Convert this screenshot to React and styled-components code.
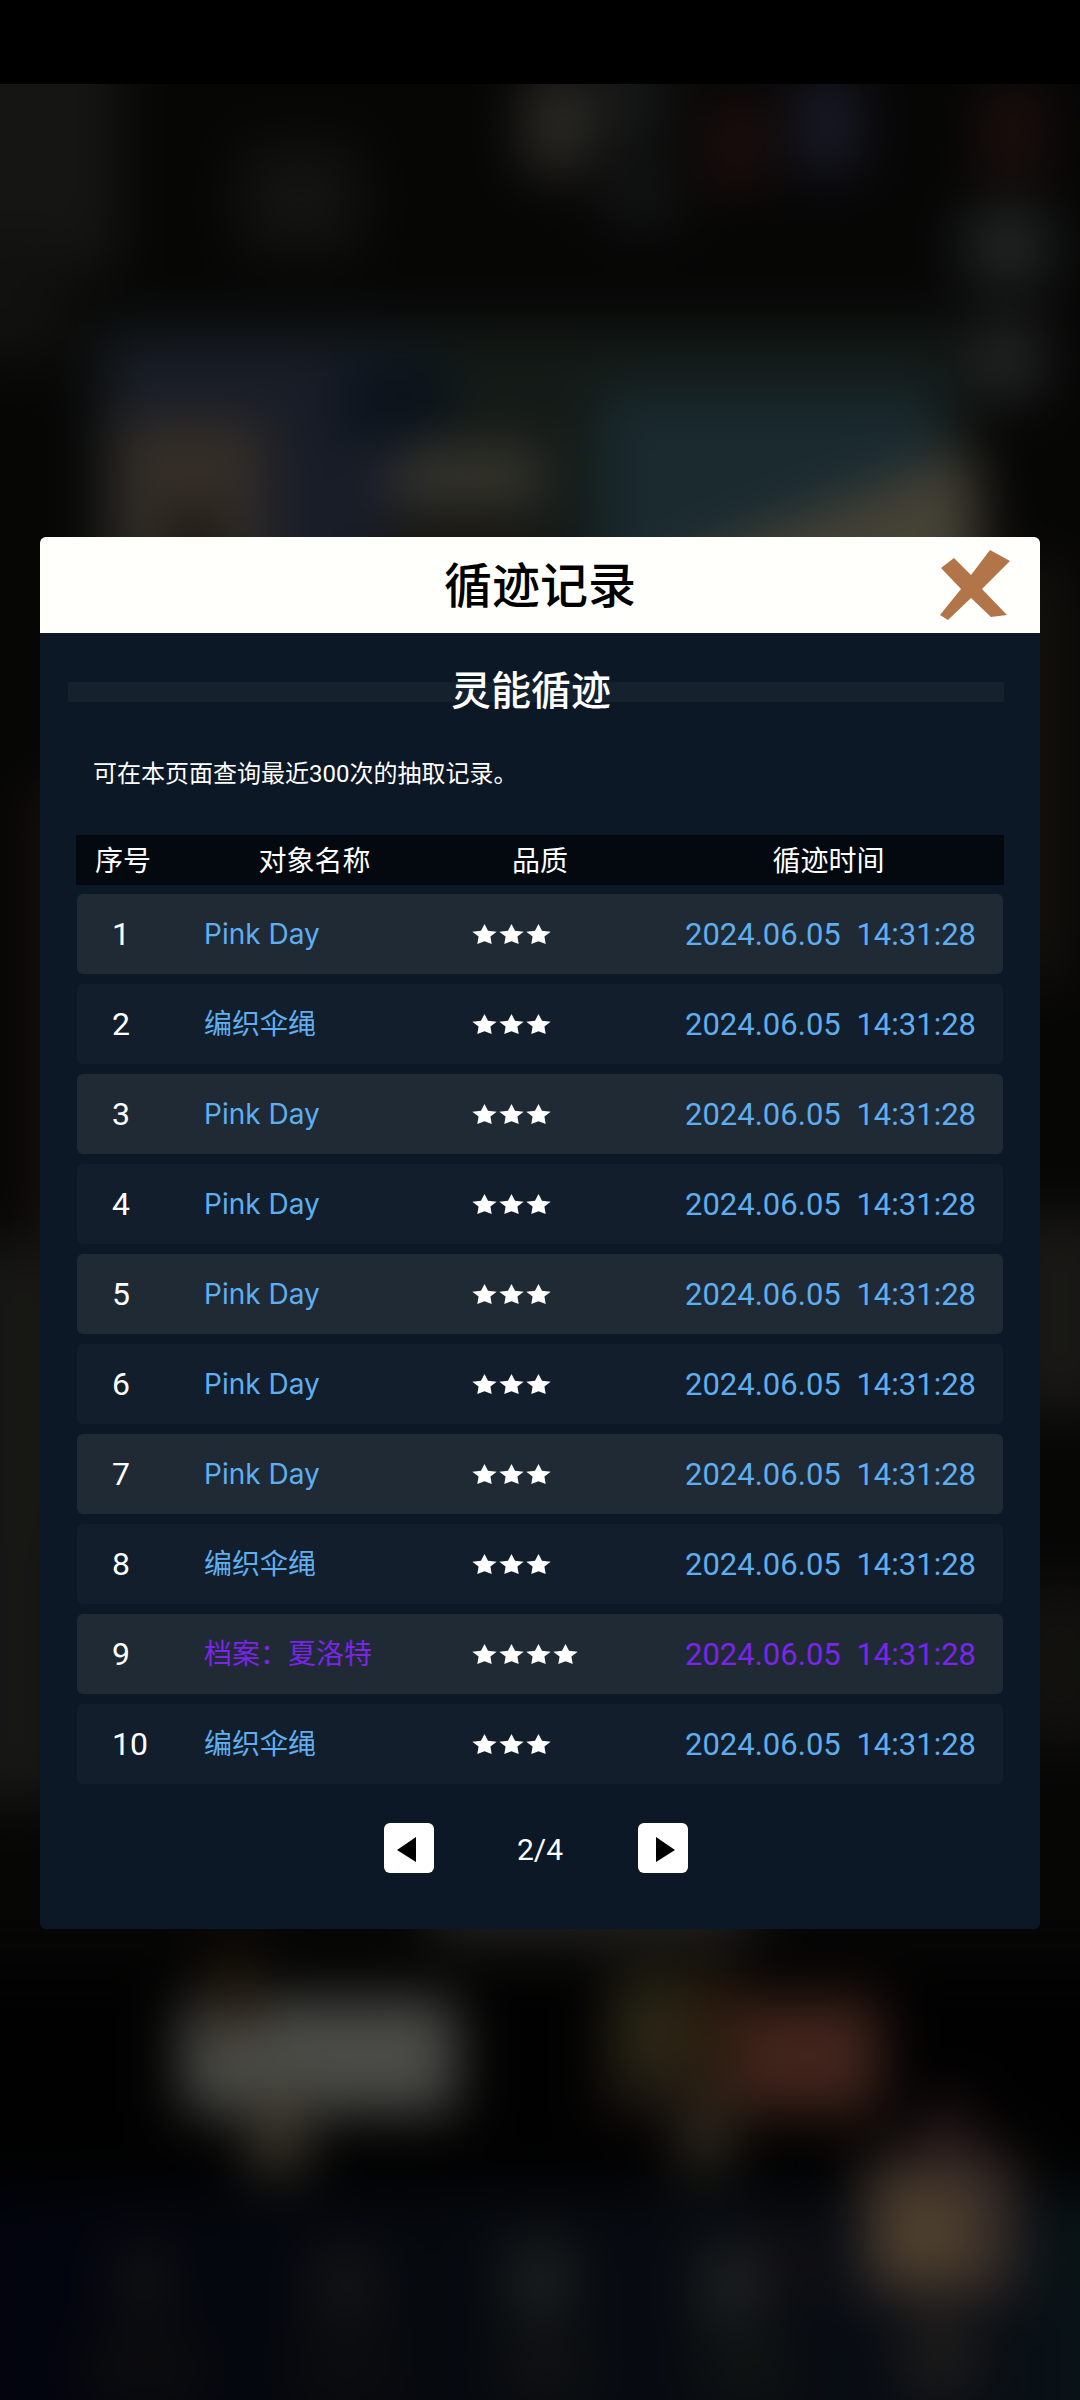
import React, { useState } from "react";
import styled, { createGlobalStyle } from "styled-components";

const records = [
  { id: 1, name: "Pink Day", stars: 3 },
  { id: 2, name: "编织伞绳", stars: 3 },
  { id: 3, name: "Pink Day", stars: 3 },
  { id: 4, name: "Pink Day", stars: 3 },
  { id: 5, name: "Pink Day", stars: 3 },
  { id: 6, name: "Pink Day", stars: 3 },
  { id: 7, name: "Pink Day", stars: 3 },
  { id: 8, name: "编织伞绳", stars: 3 },
  { id: 9, name: "档案：夏洛特", stars: 4 },
  { id: 10, name: "编织伞绳", stars: 3 },
].map((r) => ({ ...r, date: "2024.06.05", time: "14:31:28" }));

//x, y, width, height and colour of every soft shape behind the dialog
const glows = [
  //top bar of the scene
  [-60, -60, 180, 250, "#42423c"],
  [-60, 150, 130, 130, "#34342e"],
  [240, 60, 120, 110, "#3c3c38"],
  [590, -30, 80, 90, "#444a48"],
  [523, -10, 66, 100, "#848070"],
  [600, 80, 80, 60, "#3c4040"],
  [710, 15, 55, 90, "#60322c"],
  [795, -10, 65, 100, "#50507a"],
  [985, 5, 55, 90, "#62362c"],
  //banner
  [95, 240, 870, 320, "#3c5048"],
  [110, 260, 300, 280, "#4a5878"],
  [345, 285, 100, 70, "#1c3450"],
  [460, 260, 130, 120, "#3e5046"],
  [600, 310, 340, 240, "#508090"],
  [115, 335, 150, 290, "#a08c78"],
  [170, 430, 50, 150, "#40382e"],
  [395, 365, 145, 55, "#b0a890"],
  [385, 440, 150, 130, "#483c30"],
  [965, 125, 85, 75, "#687472"],
  [975, 235, 66, 80, "#6c7470"],
  //left and right of the dialog
  [36, 700, 60, 760, "#4c3826"],
  [-40, 1160, 110, 560, "#484840"],
  [1020, 480, 40, 420, "#504430"],
  [1000, 1130, 120, 200, "#4c4a42"],
  [1000, 1500, 120, 160, "#38362e"],
  //bottom buttons
  [430, 1790, 320, 70, "#68665c"],
  [182, 1915, 275, 114, "#e4e6d8"],
  [215, 1866, 40, 80, "#6c4c24"],
  [248, 2010, 60, 80, "#b0a484"],
  [610, 1890, 90, 110, "#807444"],
  [600, 2000, 70, 30, "#583c38"],
  [690, 1915, 190, 114, "#c87058"],
  [690, 1890, 50, 140, "#80502c"],
  [678, 2010, 54, 80, "#8c7c60"],
];

const lights = [
  [120, 2160, 46, 70, "#403c40"],
  [315, 2165, 60, 70, "#404448"],
  [508, 2155, 64, 80, "#586060"],
  [700, 2160, 60, 80, "#5c6464"],
  [770, 2155, 40, 50, "#4c3438"],
  [90, 2250, 110, 70, "#28282c"],
  [300, 2250, 90, 70, "#28282c"],
  [500, 2250, 90, 70, "#303638"],
  [700, 2250, 90, 70, "#303a38"],
  [920, 2020, 50, 60, "#804c54"],
  [862, 2070, 155, 140, "#a8887c"],
  [880, 2105, 90, 90, "#f0c48c"],
  [905, 2220, 70, 90, "#585450"],
];

const Glow = ({ shape: [x, y, width, height, fill] }) => (
  <rect x={x} y={y} width={width} height={height} fill={fill} />
);

function Backdrop() {
  return (
    <Scene viewBox="0 0 1080 2316" preserveAspectRatio="none" aria-hidden="true">
      <defs>
        <filter
          id="soft"
          filterUnits="userSpaceOnUse"
          x="-120"
          y="-120"
          width="1320"
          height="2560"
          colorInterpolationFilters="sRGB"
        >
          <feGaussianBlur stdDeviation="27" />
        </filter>
        <linearGradient id="floor" x1="0" x2="1">
          <stop offset="0" stopColor="#080c2c" />
          <stop offset="0.4" stopColor="#121c2c" />
          <stop offset="0.85" stopColor="#1e2c40" />
          <stop offset="1" stopColor="#1b5048" />
        </linearGradient>
      </defs>
      <rect width="1080" height="2316" fill="#141412" />
      <g filter="url(#soft)">
        <rect x="-100" y="1880" width="1300" height="260" fill="#060606" />
        {glows.map((shape) => (
          <Glow key={shape.join()} shape={shape} />
        ))}
        <path d="M680 480 900 395 975 360 985 560 640 560Z" fill="#d4c8a4" />
        <rect x="-100" y="2110" width="1300" height="320" fill="url(#floor)" />
        {lights.map((shape) => (
          <Glow key={shape.join()} shape={shape} />
        ))}
      </g>
      <rect width="1080" height="2316" fill="black" opacity="0.67" />
    </Scene>
  );
}

function Star() {
  return (
    <StarIcon viewBox="0 0 27 24" aria-hidden="true">
      <path d="M13.5 2 17 8.700 25.700 9.700 19.400 14.600 20.700 22 13.500 19.300 6.300 22 7.600 14.600 1.300 9.700 10 8.700Z" />
    </StarIcon>
  );
}

function App() {
  const [page, setPage] = useState(2);
  return (
    <Page>
      <GlobalStyle />
      <StatusBar />
      <Stage>
        <Backdrop />
        <Dialog role="dialog" aria-labelledby="dialog-title">
          <DialogHeader>
            <h1 id="dialog-title">循迹记录</h1>
            <CloseButton type="button" aria-label="关闭">
              <svg viewBox="0 0 70 73">
                <path d="M1 18 14 8 31 25 50 0 70 11 42 39 67 65 51 67 31 48 8 70 0 65 21 39Z" />
              </svg>
            </CloseButton>
          </DialogHeader>
          <Body>
            <Ribbon>
              <h2>灵能循迹</h2>
            </Ribbon>
            <Note>可在本页面查询最近300次的抽取记录。</Note>
            <Table>
              <thead>
                <HeadRow>
                  <th>序号</th>
                  <th>对象名称</th>
                  <th>品质</th>
                  <TimeHead>循迹时间</TimeHead>
                </HeadRow>
              </thead>
              <tbody>
                {records.map((r) => (
                  <Row key={r.id}>
                    <NumberCell>{r.id}</NumberCell>
                    <NameCell $rare={r.stars > 3}>{r.name}</NameCell>
                    <StarCell aria-label={`${r.stars}星`}>
                      {Array.from({ length: r.stars }, (_, i) => (
                        <Star key={i} />
                      ))}
                    </StarCell>
                    <TimeCell $rare={r.stars > 3}>
                      <span>{r.date}</span>
                      <span>{r.time}</span>
                    </TimeCell>
                  </Row>
                ))}
              </tbody>
            </Table>
            <Pager>
              <PageButton type="button" aria-label="上一页" onClick={() => setPage(Math.max(1, page - 1))}>
                <svg viewBox="0 0 50 50">
                  <path d="M13 27 32 14V39Z" />
                </svg>
              </PageButton>
              <span>{page}/4</span>
              <PageButton type="button" aria-label="下一页" onClick={() => setPage(Math.min(4, page + 1))}>
                <svg viewBox="0 0 50 50">
                  <path d="M37 27 18 14V39Z" />
                </svg>
              </PageButton>
            </Pager>
          </Body>
        </Dialog>
      </Stage>
    </Page>
  );
}

const GlobalStyle = createGlobalStyle`
  * {
    box-sizing: border-box;
    margin: 0;
    padding: 0;
  }
  body {
    background: #000;
    font-family: Roboto, "Noto Sans CJK SC", sans-serif;
    color: white;
  }
  button {
    border: none;
    cursor: pointer;
  }
`;

const Page = styled.div`
  display: flex;
  flex-direction: column;
  min-height: 100vh;
`;

const StatusBar = styled.div`
  height: 84px;
  background: black;
`;

const Stage = styled.main`
  position: relative;
  flex: 1;
  display: flex;
  align-items: center;
  padding: 0 40px 18px;
`;

const Scene = styled.svg`
  position: absolute;
  inset: 0;
  width: 100%;
  height: 100%;
`;

const Dialog = styled.section`
  position: relative;
  width: 100%;
  border-radius: 6px;
  overflow: hidden;
  background: #0c1825;
`;

const DialogHeader = styled.header`
  position: relative;
  display: flex;
  align-items: center;
  justify-content: center;
  height: 96px;
  padding-top: 4px;
  background: #fffffb;
  color: black;
  h1 {
    font-size: 48px;
    font-weight: 500;
    line-height: 72px;
  }
`;

const CloseButton = styled.button`
  position: absolute;
  top: 13px;
  right: 30px;
  width: 70px;
  height: 73px;
  background: none;
  svg {
    display: block;
    fill: #b27549;
  }
`;

const Body = styled.div`
  padding: 29px 36px 56px;
`;

const Ribbon = styled.div`
  display: flex;
  justify-content: center;
  margin-left: -8px;
  padding-right: 10px;
  background: linear-gradient(#15212d, #15212d) center / 100% 20px no-repeat;
  h2 {
    font-size: 40px;
    font-weight: 500;
    line-height: 60px;
  }
`;

const Note = styled.p`
  padding: 34px 17px 43px;
  font-size: 24px;
  line-height: 36px;
`;

const Table = styled.table`
  display: grid;
  gap: 9px;
  tbody {
    display: grid;
    gap: 10px;
    padding: 0 1px;
  }
`;

const HeadRow = styled.tr`
  display: grid;
  grid-template-columns: 94fr 288fr 162fr 382fr;
  align-items: center;
  height: 50px;
  padding-top: 2px;
  background: #03090f;
  th {
    padding-top: 2px;
    font-size: 28px;
    font-weight: 400;
    line-height: 40px;
  }
`;

const TimeHead = styled.th`
  padding-left: 32px;
`;

const Row = styled.tr`
  display: grid;
  grid-template-columns: 94fr 288fr 162fr 382fr;
  align-items: center;
  height: 80px;
  border-radius: 6px;
  background: #121e2b;
  &:nth-child(odd) {
    background: #1f2a35;
  }
`;

const NumberCell = styled.td`
  padding-left: 35px;
  font-size: 32px;
`;

const NameCell = styled.td`
  padding-left: 33px;
  font-family: Inter, "Noto Sans CJK SC", sans-serif;
  font-size: 28px;
  line-height: 40px;
  color: ${({ $rare }) => ($rare ? "#7b24ea" : "#5eaef0")};
`;

const StarCell = styled.td`
  display: flex;
  padding-left: 12px;
`;

const StarIcon = styled.svg`
  flex-shrink: 0;
  width: 27px;
  height: 24px;
  fill: white;
`;

const TimeCell = styled.td`
  display: flex;
  justify-content: space-between;
  padding: 0 27px 0 64px;
  font-size: 31px;
  color: ${({ $rare }) => ($rare ? "#7b24ea" : "#5eaef0")};
`;

const Pager = styled.nav`
  display: flex;
  align-items: center;
  justify-content: center;
  margin-top: 39px;
  padding-right: 8px;
  span {
    width: 204px;
    padding: 2px 0 0 8px;
    text-align: center;
    font-size: 30px;
  }
`;

const PageButton = styled.button`
  width: 50px;
  height: 50px;
  border-radius: 6px;
  background: white;
  svg {
    display: block;
  }
`;

export default App;
